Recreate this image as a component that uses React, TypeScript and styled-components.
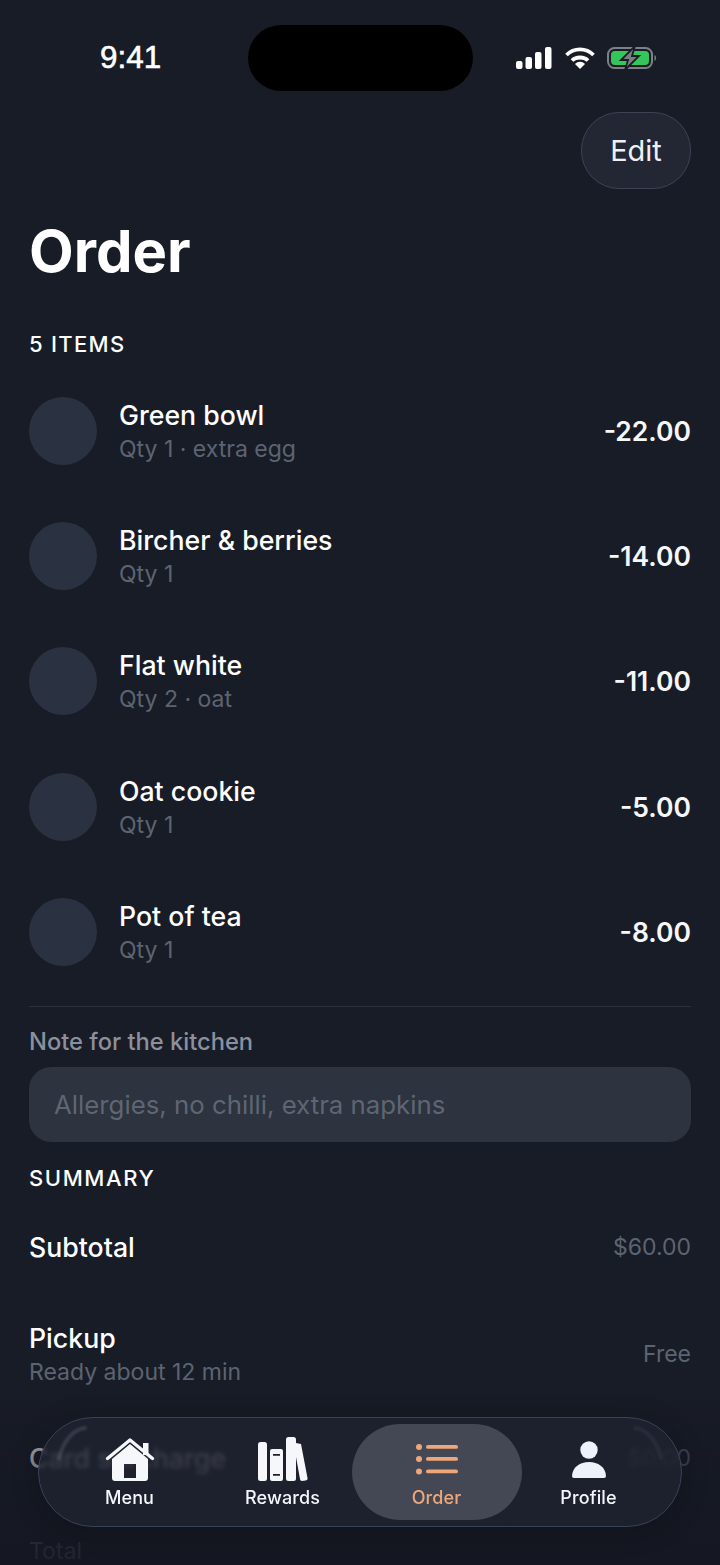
import React from 'react'
import styled, { createGlobalStyle } from 'styled-components'

const GlobalStyle = createGlobalStyle`
  html, body {
    margin: 0;
    padding: 0;
    background: #181c27;
  }
  * {
    box-sizing: border-box;
  }
`

const Screen = styled.div`
  position: relative;
  width: 720px;
  height: 1565px;
  overflow: hidden;
  background: #181c27;
  color: #fff;
  font-family: Inter, 'Liberation Sans', sans-serif;
`

const StatusBar = styled.div`
  display: flex;
  align-items: center;
  height: 116px;
  padding: 25px 0 25px 100px;
`

const Time = styled.div`
  width: 148px;
  font-family: 'Liberation Sans', Arial, sans-serif;
  font-size: 31.4px;
  font-weight: 400;
  line-height: 66px;
  -webkit-text-stroke: 0.6px #fff;
`

const Island = styled.div`
  width: 225px;
  height: 66px;
  border-radius: 33px;
  background: #000;
`

const StatusIcons = styled.div`
  display: flex;
  align-items: center;
  gap: 12.5px;
  margin-left: 43px;
`

const TopRow = styled.div`
  display: flex;
  justify-content: flex-end;
  padding: 0 29px;
  margin-top: -4px;
`

const EditButton = styled.button`
  width: 110px;
  height: 77px;
  border-radius: 38px;
  border: 1.5px solid #3b4355;
  background: #222733;
  color: #eef0f4;
  font-family: inherit;
  font-size: 29px;
  font-weight: 400;
`

const Title = styled.h1`
  margin: 23px 0 0;
  padding: 0 29px;
  font-size: 58px;
  line-height: 78px;
  font-weight: 700;
`

const SectionLabel = styled.div<{ $top: number; $spacing: number }>`
  margin-top: ${p => p.$top}px;
  padding: 0 29px;
  font-size: 22px;
  line-height: 28px;
  font-weight: 500;
  letter-spacing: ${p => p.$spacing}px;
`

const ItemList = styled.div`
  display: flex;
  flex-direction: column;
  margin: 10px 29px 0;
  padding-bottom: 12px;
  border-bottom: 1px solid #2b313d;
`

const ItemRow = styled.div`
  display: flex;
  align-items: center;
  height: 125.3px;
  gap: 22px;
`

const Avatar = styled.div`
  width: 68px;
  height: 68px;
  border-radius: 50%;
  background: #2a3140;
  flex: none;
`

const ItemText = styled.div`
  flex: 1;
  display: flex;
  flex-direction: column;
  padding-top: 2px;
`

const ItemName = styled.div`
  font-size: 26.7px;
  line-height: 34px;
  font-weight: 500;
`

const ItemSub = styled.div`
  font-size: 23px;
  line-height: 34px;
  color: #5d6471;
`

const Price = styled.div`
  font-size: 26.5px;
  font-weight: 600;
  color: #f6f7f9;
`

const NoteLabel = styled.div`
  margin-top: 19px;
  padding: 0 29px;
  font-size: 23.7px;
  line-height: 32px;
  font-weight: 500;
  color: #8b909c;
`

const NoteInput = styled.div`
  display: flex;
  align-items: center;
  height: 75px;
  margin: 9px 29px 0;
  padding: 0 25px;
  border-radius: 22px;
  background: #2d333f;
  color: #5f6673;
  font-size: 25.8px;
`

const SummaryList = styled.div`
  display: flex;
  flex-direction: column;
  margin-top: 2px;
`

const SummaryRow = styled.div<{ $height: number }>`
  display: flex;
  align-items: center;
  justify-content: space-between;
  height: ${p => p.$height}px;
  padding: 0 29px;
`

const SummaryValue = styled.div`
  font-size: 23px;
  color: #5d6471;
`

const Fade = styled.div`
  position: absolute;
  left: 0;
  right: 0;
  bottom: 0;
  height: 190px;
  background: linear-gradient(to bottom, rgba(20, 23, 33, 0), rgba(20, 23, 33, 0.45) 40%, rgba(20, 23, 33, 0.85));
  pointer-events: none;
`

const TabBar = styled.nav`
  position: absolute;
  left: 38px;
  top: 1417px;
  width: 644px;
  height: 110px;
  padding: 6px 6.5px;
  display: grid;
  grid-template-columns: 168px 138px 170px 134px;
  border-radius: 55px;
  border: 1.5px solid #3a4256;
  background: rgba(31, 36, 48, 0.76);
  backdrop-filter: blur(2px);
  box-shadow: 0 4px 24px rgba(10, 12, 18, 0.35);
`

const Tab = styled.div<{ $active?: boolean }>`
  display: flex;
  flex-direction: column;
  align-items: center;
  justify-content: flex-end;
  gap: 3px;
  padding-bottom: 10px;
  border-radius: 48px;
  background: ${p => (p.$active ? '#434854' : 'transparent')};
  color: ${p => (p.$active ? '#eda77a' : '#f4f6fb')};
  font-size: 18px;
  line-height: 24px;
  font-weight: 500;
  letter-spacing: 0.1px;
`

const LensArc = styled.svg<{ $side: 'left' | 'right' }>`
  position: absolute;
  top: 6px;
  filter: blur(1px);
  ${p => (p.$side === 'left' ? 'left: 14px;' : 'right: 14px; transform: scaleX(-1); opacity: 0.45;')}
  pointer-events: none;
`

const Signal = () => (
  <svg width="36" height="22" viewBox="0 0 36 22" fill="#fff">
    <rect x="0" y="14" width="6.5" height="8" rx="2" />
    <rect x="9.5" y="10" width="6.5" height="12" rx="2" />
    <rect x="19" y="5" width="6.5" height="17" rx="2" />
    <rect x="29" y="0" width="6.5" height="22" rx="2" />
  </svg>
)

const Wifi = () => (
  <svg width="30" height="22" viewBox="0 0 30 22" fill="none" stroke="#fff" strokeWidth="3.8">
    <path d="M1.5 8 C9 0.5 21 0.5 28.5 8" />
    <path d="M7 13.5 C11 9.5 19 9.5 23 13.5" />
    <path d="M10 17 L15 22 L20 17 C17 14 13 14 10 17 Z" fill="#fff" stroke="none" />
  </svg>
)

const Battery = () => (
  <svg width="50" height="24" viewBox="0 0 50 24" fill="none">
    <rect x="1" y="2" width="44" height="20" rx="6.5" stroke="#7d8086" strokeWidth="2" />
    <rect x="4" y="5" width="38" height="14" rx="4" fill="#34c65a" />
    <path d="M47.5 9 C49.5 9.5 49.5 14.5 47.5 15 Z" fill="#7d8086" />
    <path d="M28 0 L14 14 H21 L18 24 L32 10 H25 Z" fill="#7b7d82" stroke="#181c27" strokeWidth="1.8" />
  </svg>
)

const HomeIcon = () => (
  <svg width="50" height="46" viewBox="0 0 50 46" fill="none">
    <path
      d="M7 22 L25 7 L43 22 V41 a3 3 0 0 1 -3 3 H10 a3 3 0 0 1 -3 -3 Z M19 41 H31 V27 H19 Z"
      fill="#f6f7fb"
      fillRule="evenodd"
    />
    <path d="M2.5 21.5 L25 3 L47.5 21.5" stroke="#f6f7fb" strokeWidth="3.4" strokeLinecap="round" strokeLinejoin="round" />
    <rect x="38" y="6" width="5.5" height="12" fill="#f6f7fb" />
  </svg>
)

const BooksIcon = () => (
  <svg width="50" height="46" viewBox="0 0 50 46" fill="#f6f7fb">
    <rect x="0" y="5" width="9" height="39" rx="2.5" />
    <path
      d="M12 14 a2 2 0 0 1 2 -2 h9 a2 2 0 0 1 2 2 v28 a2 2 0 0 1 -2 2 h-9 a2 2 0 0 1 -2 -2 Z M15 17 v1.8 h7 v-1.8 Z M15 37 v1.8 h7 v-1.8 Z"
      fillRule="evenodd"
    />
    <rect x="28" y="0" width="10" height="44" rx="2.5" />
    <path d="M38 6 L43 7 L49.5 41 a2 2 0 0 1 -2 2.5 L44 44 a2 2 0 0 1 -2 -2 L38 20 Z" />
  </svg>
)

const ListIcon = () => (
  <svg width="42" height="46" viewBox="0 0 42 46" fill="#eda77a">
    <circle cx="3" cy="10" r="3" />
    <circle cx="3" cy="22" r="3" />
    <circle cx="3" cy="34.500" r="3" />
    <rect x="10" y="8" width="32" height="3.8" rx="1.9" />
    <rect x="10" y="20" width="32" height="3.8" rx="1.9" />
    <rect x="10" y="32.5" width="32" height="3.8" rx="1.9" />
  </svg>
)

const ProfileIcon = () => (
  <svg width="36" height="46" viewBox="0 0 36 46" fill="#eef2fb">
    <circle cx="18" cy="13" r="8.7" />
    <path d="M1 39 C1.5 30 9 25 18 25 C27 25 34.5 30 35 39 a2 2 0 0 1 -2 2 H3 a2 2 0 0 1 -2 -2 Z" />
  </svg>
)

const Arc = ({ side }: { side: 'left' | 'right' }) => (
  <LensArc $side={side} width="36" height="40" viewBox="0 0 36 40" fill="none">
    <path d="M32 4 C20 5 10 18 6 34" stroke="#7b8090" strokeOpacity="0.28" strokeWidth="4" strokeLinecap="round" />
  </LensArc>
)

const items = [
  { name: 'Green bowl', sub: 'Qty 1 · extra egg', price: '-22.00' },
  { name: 'Bircher & berries', sub: 'Qty 1', price: '-14.00' },
  { name: 'Flat white', sub: 'Qty 2 · oat', price: '-11.00' },
  { name: 'Oat cookie', sub: 'Qty 1', price: '-5.00' },
  { name: 'Pot of tea', sub: 'Qty 1', price: '-8.00' }
]

const App: React.FC = () => (
  <>
    <GlobalStyle />
    <Screen>
      <StatusBar>
        <Time>9:41</Time>
        <Island />
        <StatusIcons>
          <Signal />
          <Wifi />
          <Battery />
        </StatusIcons>
      </StatusBar>
      <TopRow>
        <EditButton>Edit</EditButton>
      </TopRow>
      <Title>Order</Title>
      <SectionLabel $top={40} $spacing={1.3}>
        5 ITEMS
      </SectionLabel>
      <ItemList>
        {items.map(item => (
          <ItemRow key={item.name}>
            <Avatar />
            <ItemText>
              <ItemName>{item.name}</ItemName>
              <ItemSub>{item.sub}</ItemSub>
            </ItemText>
            <Price>{item.price}</Price>
          </ItemRow>
        ))}
      </ItemList>
      <NoteLabel>Note for the kitchen</NoteLabel>
      <NoteInput>Allergies, no chilli, extra napkins</NoteInput>
      <SectionLabel $top={22} $spacing={1.6}>
        SUMMARY
      </SectionLabel>
      <SummaryList>
        <SummaryRow $height={106}>
          <ItemName>Subtotal</ItemName>
          <SummaryValue>$60.00</SummaryValue>
        </SummaryRow>
        <SummaryRow $height={107}>
          <ItemText>
            <ItemName>Pickup</ItemName>
            <ItemSub>Ready about 12 min</ItemSub>
          </ItemText>
          <SummaryValue>Free</SummaryValue>
        </SummaryRow>
        <SummaryRow $height={101}>
          <ItemName>Card surcharge</ItemName>
          <SummaryValue>$0.00</SummaryValue>
        </SummaryRow>
        <SummaryRow $height={86}>
          <ItemSub>Total</ItemSub>
        </SummaryRow>
      </SummaryList>
      <Fade />
      <TabBar>
        <Arc side="left" />
        <Arc side="right" />
        <Tab>
          <HomeIcon />
          Menu
        </Tab>
        <Tab>
          <BooksIcon />
          Rewards
        </Tab>
        <Tab $active>
          <ListIcon />
          Order
        </Tab>
        <Tab>
          <ProfileIcon />
          Profile
        </Tab>
      </TabBar>
    </Screen>
  </>
)

export default App
